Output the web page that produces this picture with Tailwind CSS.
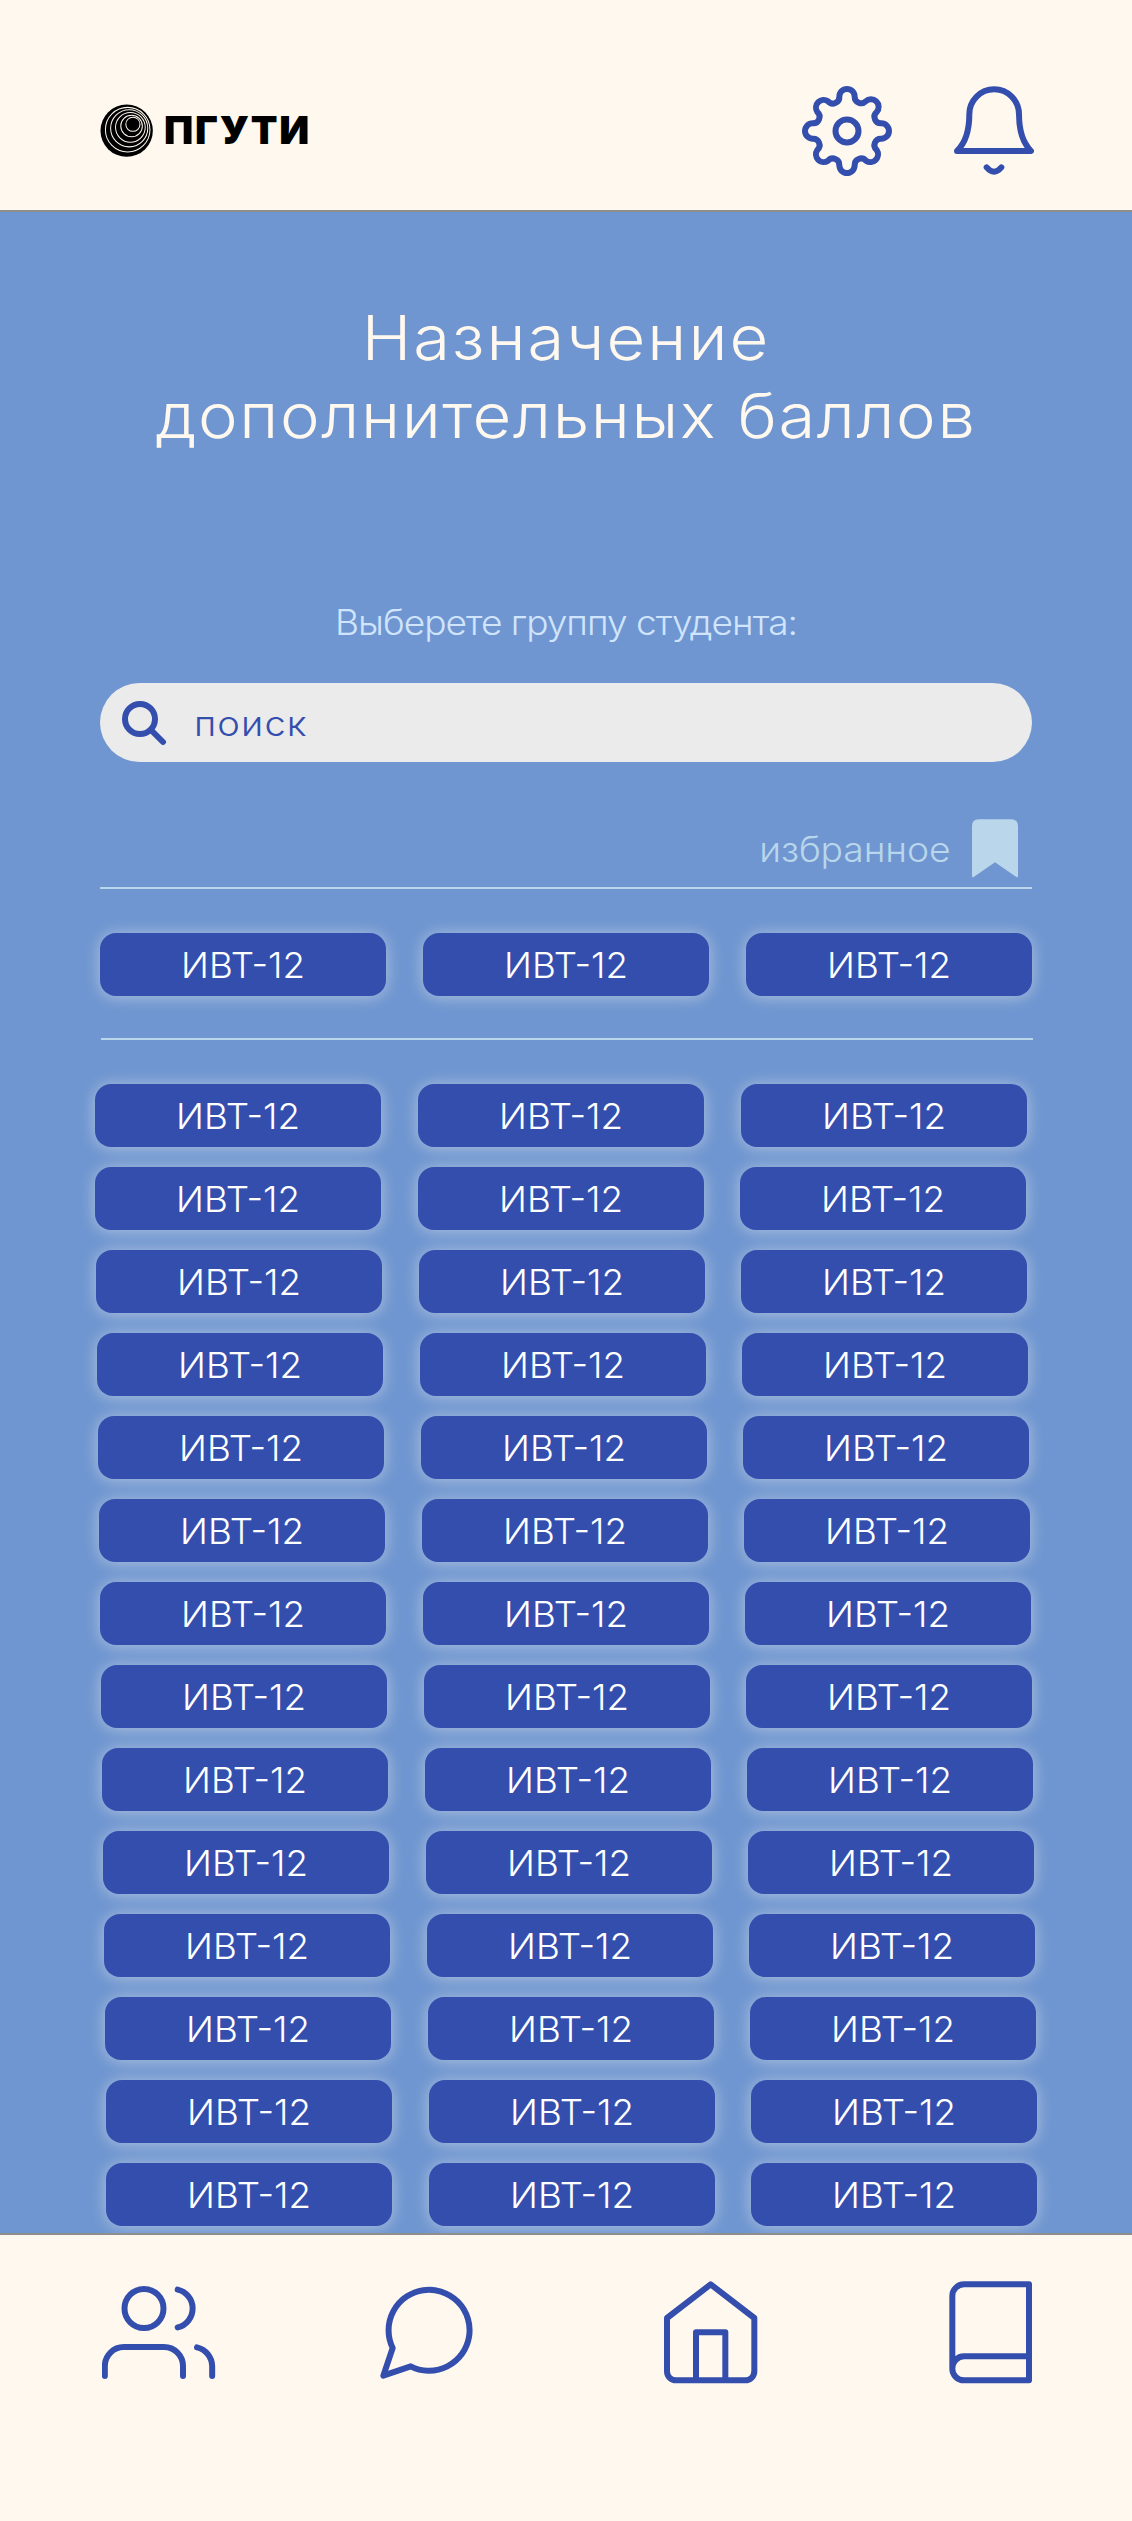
<!DOCTYPE html>
<html lang="ru">
<head>
<meta charset="utf-8">
<title>Назначение дополнительных баллов</title>
<script src="https://cdn.jsdelivr.net/npm/@tailwindcss/browser@4"></script>
</head>
<body class="bg-[#6f96d1] font-['Inter',sans-serif] font-light">
<div class="flex h-[2521px] w-[1132px] flex-col overflow-hidden">
  <header class="flex h-[212px] shrink-0 items-start border-b-2 border-[#8e8e8c] bg-[#fff8ee] pl-[100px]">
    <div class="mt-[104px] flex w-[702px] items-start gap-[11px]">
      <svg class="h-[53px] w-[53px]" viewBox="61 42 157 157">
        <circle cx="140" cy="121" r="77.500"/>
        <g fill="none" stroke="#fff8ee" stroke-width="3">
          <circle cx="158.500" cy="102" r="21"/><circle cx="154.500" cy="107" r="32"/><circle cx="151" cy="111" r="44"/><circle cx="147.500" cy="114" r="55"/><circle cx="143" cy="118" r="66"/>
        </g>
      </svg>
      <span class="mt-[2px] text-[39px] leading-[48px] font-black tracking-[1.8px] text-black">ПГУТИ</span>
    </div>
    <svg class="mt-[86px] h-[90px] w-[90px]" viewBox="66 48 270 270" fill="none" stroke="#344eae" stroke-width="18" stroke-linejoin="round">
      <path d="M178 80A23 23 0 0 1 224 80A19.400 19.400 0 0 0 257 94A23 23 0 0 1 290 126A19.400 19.400 0 0 0 304 160A23 23 0 0 1 304 206A19.400 19.400 0 0 0 290 240A23 23 0 0 1 258 272A19.400 19.400 0 0 0 224 286A23 23 0 0 1 178 286A19.400 19.400 0 0 0 144 272A23 23 0 0 1 112 240A19.400 19.400 0 0 0 98 206A23 23 0 0 1 98 160A19.400 19.400 0 0 0 112 126A23 23 0 0 1 144 94A19.400 19.400 0 0 0 178 80Z"/>
      <circle cx="201" cy="183" r="34.500"/>
    </svg>
    <svg class="mt-[86px] ml-[62px] h-[90px] w-[80px]" viewBox="522 48 240 270" fill="none" stroke="#344eae" stroke-width="18" stroke-linecap="round" stroke-linejoin="round">
      <path d="M568 133A74.500 75 0 0 1 717 133C717 180 730 220 753 243H531C555 220 568 180 568 133ZM620 292Q642 318 664 292"/>
    </svg>
  </header>

  <main class="flex h-[2021px] shrink-0 flex-col overflow-hidden">
    <h1 class="mt-[87px] h-[156px] scale-x-[1.08] text-center text-[62px] leading-[78px] tracking-[1.85px] text-[#fff8ee]">Назначение<br><span class="tracking-[1.5px]">дополнительных баллов</span></h1>
    <p class="mt-[145px] h-[44px] scale-x-[1.06] text-center text-[35px] leading-[44px] tracking-[-0.95px] text-[#d0e4fb]">Выберете группу студента:</p>
    <div class="mt-[39px] ml-[100px] flex h-[79px] w-[932px] shrink-0 items-center rounded-full bg-[#ebebeb] pl-[21px] text-[#344eae]">
      <svg class="h-[46px] w-[46px]" viewBox="123 90 138 138" fill="none" stroke="#344eae" stroke-width="18" stroke-linecap="round"><circle cx="180" cy="147" r="45"/><path d="M213 180L249 216"/></svg>
      <span class="ml-[27px] origin-left scale-x-[1.09] text-[35px] leading-[44px] tracking-[1px]">поиск</span>
    </div>
    <div class="mt-[57px] ml-[100px] flex h-[70px] w-[932px] shrink-0 items-start justify-end border-b-2 border-[#b9d6ea] pr-[14px]">
      <span class="mt-[8px] mr-[22px] origin-right scale-x-[1.065] text-[35px] leading-[44px] tracking-[-0.1px] text-[#b9d6ea]">избранное</span>
      <svg class="h-[59px] w-[46px]" viewBox="756 117 138 177" fill="#b9d6ea"><path d="M756 138q0-20 20-20H874q20 0 20 20V288q0 5-5 3L825 247L761 291q-5 2-5-3Z"/></svg>
    </div>
    <div id="favourites" class="mt-[44px] ml-[100px] h-[63px] shrink-0"></div>
    <div class="mt-[42px] ml-[101px] h-[2px] w-[932px] shrink-0 bg-[#b9d6ea]"></div>
    <div id="groups" class="mt-[44px] flex shrink-0 flex-col gap-[20px]"></div>
  </main>

  <nav class="flex h-[288px] shrink-0 items-start border-t-2 border-[#8e8e8c] bg-[#fff8ee] pt-[46px] pl-[102px]">
    <svg class="mt-[5px] h-[94px] w-[114px]" viewBox="66 498 342 282" fill="none" stroke="#344eae" stroke-width="18" stroke-linecap="round"><circle cx="192" cy="565.500" r="58.500"/><path d="M293 509A58 58 0 0 1 293 622M74.500 768V738A57 57 0 0 1 132 681H252A57 57 0 0 1 309 738V768M351 682A59 59 0 0 1 396.500 738V768"/></svg>
    <svg class="mt-[5px] ml-[164px] h-[93px] w-[93px]" viewBox="60 258 279 279" fill="none" stroke="#344eae" stroke-width="18" stroke-linejoin="round"><path d="M98 444A121.500 121.500 0 1 1 152 499L70 527Z"/></svg>
    <svg class="ml-[191px] h-[103px] w-[94px]" viewBox="72 483 282 309" fill="none" stroke="#344eae" stroke-width="18" stroke-linejoin="round"><path d="M212 493L343 594V755A27 27 0 0 1 316 781H108A27 27 0 0 1 81 755V594ZM168 781V637H256V781"/></svg>
    <svg class="ml-[191px] h-[103px] w-[83px]" viewBox="927 483 249 309" fill="none" stroke="#344eae" stroke-width="18" stroke-linejoin="round"><path d="M972 493H1167V781H972A35 35 0 0 1 937 745V528A35 35 0 0 1 972 493ZM937 745A35 36 0 0 1 972 709H1167"/></svg>
  </nav>
</div>
<script>
const button = '<button class="h-[63px] w-[286px] rounded-[16px] bg-[#344eae] pt-px text-[35px] leading-[44px] text-white shadow-[0_1px_16px_rgba(255,248,238,0.46)]"><span class="inline-block scale-x-[1.05]">ИВТ-12</span></button>';
const pair = '<div class="flex gap-[37px]">' + button + button + '</div>';
document.getElementById('favourites').innerHTML = '<div class="flex gap-[37px]">' + pair + button + '</div>';
const offsets = [95, 95, 96, 97, 98, 99, 100, 101, 102, 103, 104, 105, 106, 106];
document.getElementById('groups').innerHTML = offsets.map((x, i) =>
  `<div class="flex ${i ? 'gap-[36px]' : 'gap-[37px]'}" style="padding-left:${x}px">${pair}${button}</div>`).join('');
</script>
</body>
</html>
